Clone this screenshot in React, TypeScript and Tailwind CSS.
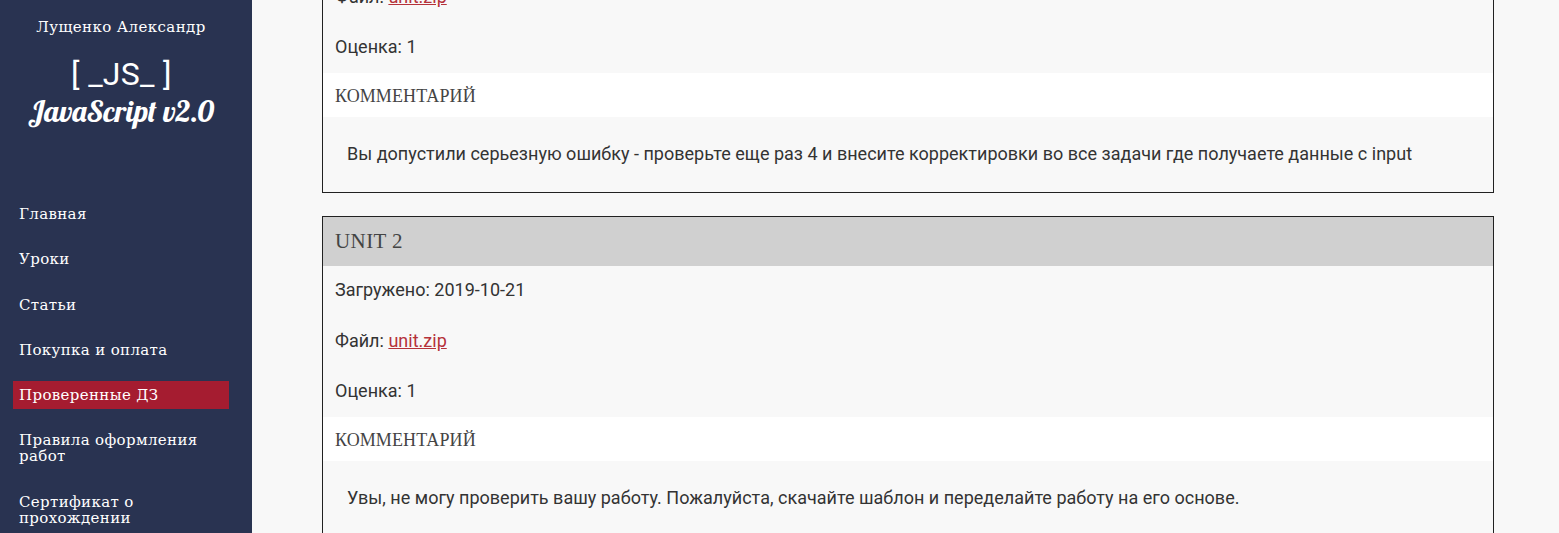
import React from 'react';

interface Homework {
    title: string;
    uploaded: string;
    file: string;
    mark: number;
    comment: string;
}

const NAV_ITEMS: { label: string; active?: boolean }[] = [
    { label: 'Главная' },
    { label: 'Уроки' },
    { label: 'Статьи' },
    { label: 'Покупка и оплата' },
    { label: 'Проверенные ДЗ', active: true },
    { label: 'Правила оформления работ' },
    { label: 'Сертификат о прохождении' },
];

const HOMEWORKS: Homework[] = [
    {
        title: 'Unit 1',
        uploaded: '2019-10-21',
        file: 'unit.zip',
        mark: 1,
        comment: 'Вы допустили серьезную ошибку - проверьте еще раз 4 и внесите корректировки во все задачи где получаете данные с input',
    },
    {
        title: 'Unit 2',
        uploaded: '2019-10-21',
        file: 'unit.zip',
        mark: 1,
        comment: 'Увы, не могу проверить вашу работу. Пожалуйста, скачайте шаблон и переделайте работу на его основе.',
    },
];

const Sidebar: React.FC = () => (
    <aside className="w-[252px] h-full shrink-0 overflow-hidden bg-[#293351] text-white font-['Roboto_Slab','DejaVu_Serif',serif]">
        <div className="w-[242px] pt-[17px] text-center">
            <div className="text-[15px] leading-5 tracking-[0.4px]">Лущенко Александр</div>
            <div className="mt-[18px] pl-px font-[Roboto,sans-serif] text-[32px] leading-[38px] tracking-[0.3px]">[ _JS_ ]</div>
            <div className="font-[Lobster,'Liberation_Serif',serif] text-[30px] leading-[37px] whitespace-nowrap">JavaScript v2.0</div>
        </div>
        <nav className="mt-[70px] ml-[13px] w-[216px] flex flex-col gap-[17.3px]">
            {NAV_ITEMS.map(item => (
                <a key={item.label}
                    className={`block px-1.5 py-1.5 text-[15px] leading-4 tracking-[0.35px] ${item.active ? 'bg-[#a51c30]' : ''}`}>
                    {item.label}
                </a>
            ))}
        </nav>
    </aside>
);

const HomeworkCard: React.FC<{ work: Homework }> = ({ work }) => (
    <section className="border border-[#212121] text-[18px] leading-[25.2px] tracking-[0.01px]">
        <h2 className="h-[48.8px] px-3 pt-[12px] bg-[#d0d0d0] font-['Roboto_Slab','Liberation_Serif',serif] text-[21px] tracking-[0.4px] font-light uppercase text-[#444]">{work.title}</h2>
        <p className="h-[50.4px] px-3 pt-[11px]">Загружено: {work.uploaded}</p>
        <p className="h-[50.4px] px-3 pt-[11.6px]">Файл: <a className="text-[#b5323a] underline">{work.file}</a></p>
        <p className="h-[50.4px] px-3 pt-[11.5px]">Оценка: {work.mark}</p>
        <h3 className="h-[44.4px] px-3 pt-[11px] bg-white font-['Roboto_Slab','Liberation_Serif',serif] text-[18px] tracking-[0.1px] font-light uppercase text-[#444]">Комментарий</h3>
        <p className="pt-[23.6px] px-6 pb-[25.7px]">{work.comment}</p>
    </section>
);

export default function App() {
    return (
        <div className="h-[533px] flex overflow-hidden bg-[#f8f8f8] text-[#333] font-[Roboto,sans-serif]">
            <Sidebar />
            {/* list is scrolled down so that the first card is cut off at the top */}
            <main className="flex-1 h-full overflow-hidden pl-[70px] pr-[65px]">
                <div className="-mt-[128px] flex flex-col gap-[23.2px]">
                    {HOMEWORKS.map(work => <HomeworkCard key={work.title} work={work} />)}
                </div>
            </main>
        </div>
    );
}
